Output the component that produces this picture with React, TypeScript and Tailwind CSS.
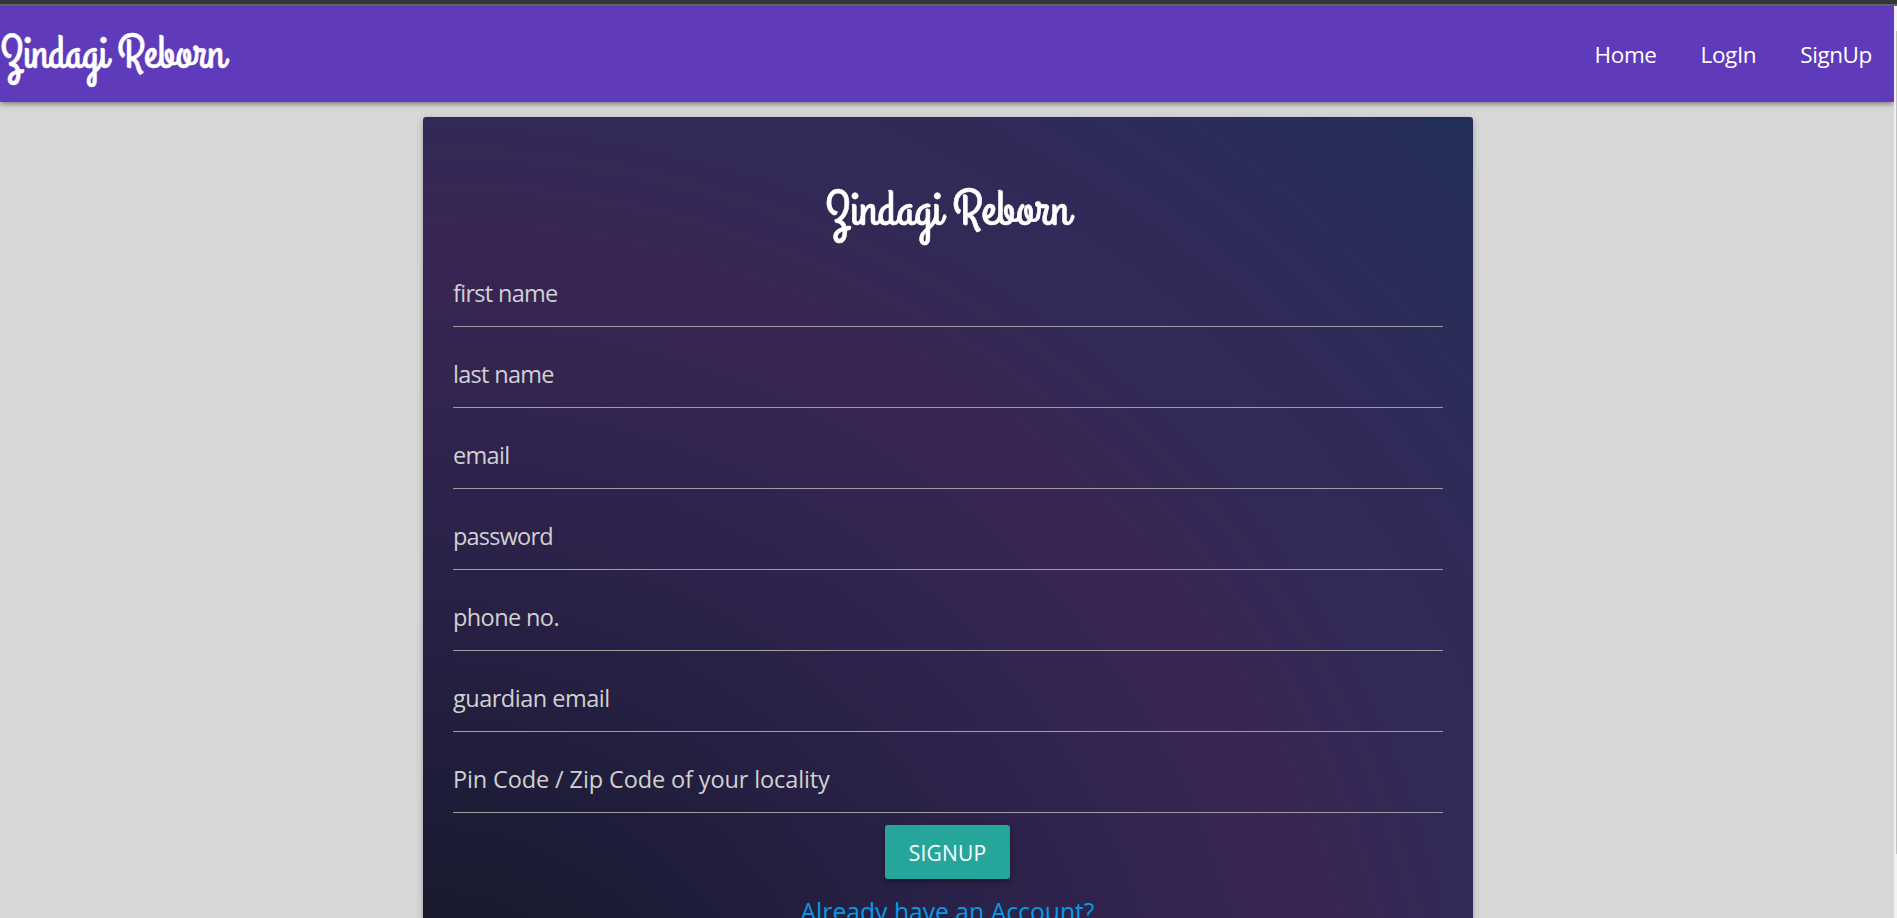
import clsx from 'clsx';

const navLinks = ['Home', 'LogIn', 'SignUp'];

const fields = [
  { name: 'firstName', type: 'text', placeholder: 'first name', tracking: 'tracking-[-0.7px]' },
  { name: 'lastName', type: 'text', placeholder: 'last name', tracking: 'tracking-[-0.7px]' },
  { name: 'email', type: 'email', placeholder: 'email', tracking: 'tracking-[-0.7px]' },
  { name: 'password', type: 'password', placeholder: 'password', tracking: 'tracking-[-0.8px]' },
  { name: 'phone', type: 'text', placeholder: 'phone no.', tracking: 'tracking-[-0.6px]' },
  { name: 'guardianEmail', type: 'email', placeholder: 'guardian email', tracking: 'tracking-[-0.5px]' },
  { name: 'pin', type: 'text', placeholder: 'Pin Code / Zip Code of your locality', tracking: 'tracking-[-0.12px]' },
];

function Logo({ className }: { className: string }) {
  return (
    <svg viewBox="0 0 228 56" className={clsx('block overflow-visible', className)}>
      <text
        x="0.5"
        y="41"
        textLength="224"
        lengthAdjust="spacingAndGlyphs"
        className="fill-white stroke-white stroke-[0.5px] font-['Grand_Hotel','Lato'] text-[47px]"
      >
        Zindagi Reborn
      </text>
    </svg>
  );
}

function Navbar() {
  return (
    <nav className="relative z-10 flex h-24 items-center justify-between bg-[#5f3bbb] shadow-[0_3px_3px_0_rgba(0,0,0,0.14),0_4px_2px_-3px_rgba(0,0,0,0.12),0_2px_8px_0_rgba(0,0,0,0.2)]">
      <Logo className="h-14 w-[228px]" />
      <ul className="flex pt-px">
        {navLinks.map((link) => (
          <li key={link}>
            <a href="#" className="block px-[22px] text-[22.5px] text-white tracking-[-0.4px]">
              {link}
            </a>
          </li>
        ))}
      </ul>
    </nav>
  );
}

function SignupCard() {
  return (
    <div className="ml-[423px] mt-[15px] h-[990px] w-[1050px] rounded-[3px] bg-[radial-gradient(ellipse_farthest-corner_at_left_bottom,#1a1a2e_0%,#1a1a2e_14%,#1c1c36_20%,#251f41_32%,#2a2148_39%,#31244f_50%,#3a2553_61%,#332956_70%,#302a59_80%,#242f59_98%)] px-[30px] pt-[62px] text-center shadow-[0_3px_3px_0_rgba(0,0,0,0.14),0_4px_2px_-3px_rgba(0,0,0,0.12),0_2px_8px_0_rgba(0,0,0,0.2)]">
      <Logo className="ml-[372px] h-[61px] w-[248px]" />
      <form className="mt-[21px]" onSubmit={(e) => e.preventDefault()}>
        {fields.map((field) => (
          <input
            key={field.name}
            name={field.name}
            type={field.type}
            placeholder={field.placeholder}
            className={clsx(
              'block h-[66px] mb-[15px] w-full border-b border-[#9e9e9e] bg-transparent pb-px text-[23.5px] text-white outline-none placeholder:text-[#d1d1d1]',
              field.tracking,
            )}
          />
        ))}
        <button className="ml-[432px] mt-[-3px] block h-[54px] w-[125px] rounded-[3px] bg-[#26a69a] pt-[3px] text-[21px] text-white tracking-[0.2px] shadow-[0_3px_3px_0_rgba(0,0,0,0.14),0_4px_2px_-3px_rgba(0,0,0,0.12),0_2px_8px_0_rgba(0,0,0,0.2)]">
          SIGNUP
        </button>
      </form>
      <a href="#" className="mt-[14px] block pr-px text-[24.7px] leading-[38px] text-[#039be5]">
        Already have an Account?
      </a>
    </div>
  );
}

export default function App() {
  return (
    <div className="flex h-screen flex-col overflow-hidden bg-[#d8d8d8] font-['Segoe_UI','Open_Sans',sans-serif]">
      <div className="h-[6px] shrink-0 border-b-2 border-[#5f6063] bg-[#35363a]" />
      <div className="flex min-h-0 flex-1">
        <div className="h-full flex-1 overflow-hidden">
          <Navbar />
          <SignupCard />
        </div>
        <div className="w-[3px] bg-[#f1f1f1] pl-[2px] pt-[25px]">
          <div className="h-[823px] bg-[#c1c1c1]" />
        </div>
      </div>
    </div>
  );
}
